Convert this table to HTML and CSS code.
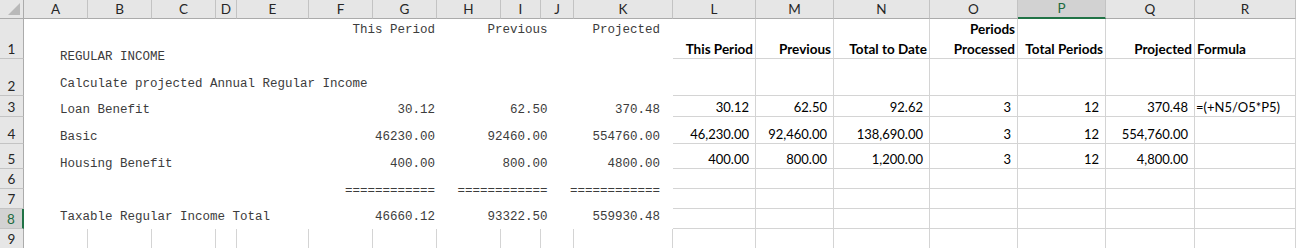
FILE: index.html
```html
<!DOCTYPE html>
<html>
<head>
<meta charset="utf-8">
<title>Regular Income</title>
<link rel="stylesheet" href="styles.css">
</head>
<body>
<div class="sheet">
  <div class="corner"><svg class="corner-tri" width="23" height="18" viewBox="0 0 23 18"><polygon points="8,15 20,15 20,3" fill="#b9b9b9"/></svg></div>
  <div class="ch">A</div>
  <div class="ch">B</div>
  <div class="ch">C</div>
  <div class="ch">D</div>
  <div class="ch">E</div>
  <div class="ch">F</div>
  <div class="ch">G</div>
  <div class="ch">H</div>
  <div class="ch">I</div>
  <div class="ch">J</div>
  <div class="ch">K</div>
  <div class="ch">L</div>
  <div class="ch">M</div>
  <div class="ch">N</div>
  <div class="ch">O</div>
  <div class="ch sel">P</div>
  <div class="ch">Q</div>
  <div class="ch">R</div>

  <div class="report"><pre class="report-text">                                       This Period       Previous      Projected
REGULAR INCOME
Calculate projected Annual Regular Income
Loan Benefit                                 30.12          62.50         370.48
Basic                                     46230.00       92460.00      554760.00
Housing Benefit                             400.00         800.00        4800.00
                                      ============   ============   ============
Taxable Regular Income Total              46660.12       93322.50      559930.48</pre></div>

  <div class="rh">1</div>
  <div class="c hd"><span>This Period</span></div>
  <div class="c hd"><span>Previous</span></div>
  <div class="c hd"><span>Total to Date</span></div>
  <div class="c hd"><span>Periods<br>Processed</span></div>
  <div class="c hd"><span>Total Periods</span></div>
  <div class="c hd"><span>Projected</span></div>
  <div class="c hd lft"><span>Formula</span></div>

  <div class="rh">2</div>
  <div class="c"></div>
  <div class="c"></div>
  <div class="c"></div>
  <div class="c"></div>
  <div class="c"></div>
  <div class="c"></div>
  <div class="c"></div>

  <div class="rh">3</div>
  <div class="c num">30.12</div>
  <div class="c num">62.50</div>
  <div class="c num">92.62</div>
  <div class="c num">3</div>
  <div class="c num">12</div>
  <div class="c num">370.48</div>
  <div class="c txt">=(+N5/O5*P5)</div>

  <div class="rh">4</div>
  <div class="c num">46,230.00</div>
  <div class="c num">92,460.00</div>
  <div class="c num">138,690.00</div>
  <div class="c num">3</div>
  <div class="c num">12</div>
  <div class="c num">554,760.00</div>
  <div class="c txt"></div>

  <div class="rh">5</div>
  <div class="c num">400.00</div>
  <div class="c num">800.00</div>
  <div class="c num">1,200.00</div>
  <div class="c num">3</div>
  <div class="c num">12</div>
  <div class="c num">4,800.00</div>
  <div class="c txt"></div>

  <div class="rh">6</div>
  <div class="c"></div>
  <div class="c"></div>
  <div class="c"></div>
  <div class="c"></div>
  <div class="c"></div>
  <div class="c"></div>
  <div class="c"></div>

  <div class="rh">7</div>
  <div class="c"></div>
  <div class="c"></div>
  <div class="c"></div>
  <div class="c"></div>
  <div class="c"></div>
  <div class="c"></div>
  <div class="c"></div>

  <div class="rh sel">8</div>
  <div class="c"></div>
  <div class="c"></div>
  <div class="c"></div>
  <div class="c"></div>
  <div class="c"></div>
  <div class="c"></div>
  <div class="c"></div>

  <div class="rh">9</div>
  <div class="c"></div>
  <div class="c"></div>
  <div class="c"></div>
  <div class="c"></div>
  <div class="c"></div>
  <div class="c"></div>
  <div class="c"></div>
  <div class="c"></div>
  <div class="c"></div>
  <div class="c"></div>
  <div class="c"></div>
  <div class="c"></div>
  <div class="c"></div>
  <div class="c"></div>
  <div class="c"></div>
  <div class="c"></div>
  <div class="c"></div>
  <div class="c"></div>
</div>
</body>
</html>
```

FILE: styles.css
```css
html, body {
  margin: 0;
  padding: 0;
  background: #ffffff;
}

body {
  width: 1296px;
  height: 248px;
  overflow: hidden;
}

.sheet {
  display: grid;
  grid-template-columns: 24px 64px 64px 64px 21px 72px 64px 64px 64px 40px 33px 99px 83px 78px 96px 88px 88px 89px 101px;
  grid-template-rows: 19px 40px 37px 21px 27px 25px 20px 20px 20px 20px;
  font-family: Lato, "Liberation Sans", sans-serif;
  font-size: 13px;
  color: #000000;
}

.corner {
  background: #e6e6e6;
  border-right: 1px solid #ababab;
  border-bottom: 1px solid #ababab;
  box-sizing: border-box;
}

.corner-tri {
  display: block;
}

.ch {
  background: #e6e6e6;
  border-right: 1px solid #c3c3c3;
  border-bottom: 1px solid #ababab;
  box-sizing: border-box;
  text-align: center;
  line-height: 18px;
  font-size: 13.5px;
  color: #262626;
}

.ch.sel {
  background: #d2d2d2;
  border-bottom: 2px solid #217346;
  color: #1d6b3f;
  line-height: 17px;
}

.rh {
  background: #e6e6e6;
  border-right: 1px solid #ababab;
  border-bottom: 1px solid #c3c3c3;
  box-sizing: border-box;
  display: flex;
  align-items: flex-end;
  justify-content: center;
  line-height: 16px;
  font-size: 13.5px;
  padding-bottom: 1px;
  color: #262626;
}

.rh.sel {
  background: #d2d2d2;
  border-right: 2px solid #217346;
  color: #1d6b3f;
}

.c {
  border-right: 1px solid #d4d4d4;
  border-bottom: 1px solid #d4d4d4;
  box-sizing: border-box;
  display: flex;
  align-items: flex-end;
  justify-content: flex-end;
  line-height: 18px;
  white-space: nowrap;
  min-width: 0;
}

.hd {
  font-weight: 700;
  font-size: 13.5px;
  line-height: 20px;
  padding: 0 2px;
  text-align: right;
}

.hd span {
  margin-bottom: -1px;
}

.num {
  padding-right: 6px;
}

.lft {
  justify-content: flex-start;
  text-align: left;
}

.txt {
  justify-content: flex-start;
  padding-left: 1px;
}

.report {
  grid-column: 2 / 13;
  grid-row: 2 / 10;
  background: #ffffff;
  overflow: hidden;
}

.report-text {
  margin: -2px 0 0 0;
  padding-left: 36px;
  font-family: "Liberation Mono", "Courier New", monospace;
  font-size: 12.5px;
  line-height: 26.77px;
  color: #3c3c3c;
  white-space: pre;
}
```
